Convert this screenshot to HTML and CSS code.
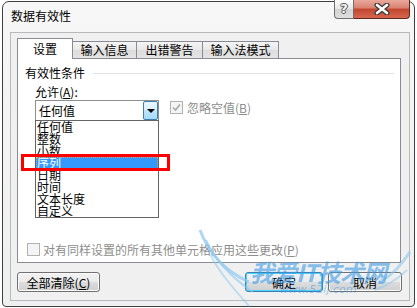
FILE: index.html
```html
<!DOCTYPE html>
<html>
<head>
    <title>数据有效性</title>
    <link rel="stylesheet" href="styles.css">
</head>
<body>
    <div class="window">
        <div class="titlebar">
            <span class="title">数据有效性</span>
            <div class="controls">
                <span class="btn-help">?</span>
                <span class="btn-close">
                    <svg width="16" height="12" viewBox="0 0 16 12">
                        <path d="M3 2 L13 10 M13 2 L3 10" stroke="#3a3a3a" stroke-width="5" stroke-linecap="round"/>
                        <path d="M3 2 L13 10 M13 2 L3 10" stroke="#ffffff" stroke-width="2.6" stroke-linecap="round"/>
                    </svg>
                </span>
            </div>
        </div>

        <div class="client">
            <div class="tabs">
                <div class="tab active">设置</div>
                <div class="tab tab-input">输入信息</div>
                <div class="tab tab-error">出错警告</div>
                <div class="tab tab-ime">输入法模式</div>
            </div>

            <div class="panel">
                <div class="legend">有效性条件</div>
                <div class="field-label">允许(<u>A</u>):</div>
                <div class="field-row">
                    <div class="combo">
                        <span class="combo-value">任何值</span>
                        <span class="combo-arrow"></span>
                    </div>
                    <label class="check disabled">
                        <span class="box">
                            <svg width="11" height="11" viewBox="0 0 11 11">
                                <path d="M2 5.5 L4.5 8 L9 2.5" fill="none" stroke="#a8a8a8" stroke-width="1.6"/>
                            </svg>
                        </span>
                        忽略空值(<u>B</u>)
                    </label>
                </div>

                <!-- open list of the combo -->
                <ul class="dropdown">
                    <li>任何值</li>
                    <li>整数</li>
                    <li>小数</li>
                    <li class="selected">序列</li>
                    <li>日期</li>
                    <li>时间</li>
                    <li>文本长度</li>
                    <li>自定义</li>
                </ul>
                <div class="marker"></div>

                <label class="check disabled apply-all">
                    <span class="box"></span>
                    对有同样设置的所有其他单元格应用这些更改(<u>P</u>)
                </label>
            </div>

            <div class="footer">
                <button class="btn btn-clear">全部清除(<u>C</u>)</button>
                <button class="btn btn-ok">确定</button>
                <button class="btn btn-cancel">取消</button>
            </div>
        </div>

        <!-- site watermark -->
        <svg class="wings" width="411" height="305" viewBox="0 0 411 305">
            <path d="M197 228 C205 250 220 268 246 280" fill="none" stroke="#8cc8f0" stroke-width="3" opacity="0.7"/>
            <path d="M203 238 C212 258 226 274 250 290" fill="none" stroke="#8cc8f0" stroke-width="2" opacity="0.6"/>
            <path d="M207 252 C216 270 230 286 246 304" fill="none" stroke="#8cc8f0" stroke-width="2" opacity="0.5"/>
            <path d="M407 250 C398 262 392 272 376 280" fill="none" stroke="#8cc8f0" stroke-width="3" opacity="0.6"/>
            <path d="M404 268 C396 276 388 282 372 288" fill="none" stroke="#8cc8f0" stroke-width="2" opacity="0.5"/>
        </svg>
        <div class="watermark">
            <div class="wm-name">我爱IT技术网</div>
            <div class="wm-url">www.52ij.com</div>
        </div>
    </div>
</body>
</html>
```

FILE: styles.css
```css
body {
    margin: 0;
    width: 417px;
    height: 308px;
    overflow: hidden;
    background: #ffffff;
    font-family: "Noto Sans CJK SC", sans-serif;
    font-size: 12px;
    color: #000;
}
.window {
    position: relative;
    margin: 1px 0 0 2px;
    width: 413px;
    height: 306px;
    box-sizing: border-box;
    border: 1px solid #3f3f3f;
    border-radius: 7px 7px 4px 4px;
    background: linear-gradient(#f7f7f7, #eeeff0);
    padding: 0 4px 0 7px;
    display: flex;
    flex-direction: column;
}
.titlebar {
    height: 30px;
    display: flex;
    align-items: flex-start;
}
.title {
    padding: 6px 0 0 1px;
    line-height: 16px;
}
.controls {
    margin: -2px 0 0 auto;
    display: flex;
}
.btn-help {
    width: 20px;
    height: 19px;
    box-sizing: border-box;
    border: 1px solid #6f6f6f;
    border-top: none;
    border-radius: 0 0 0 4px;
    background: linear-gradient(#fdfdfd, #e6e6e6 50%, #d2d2d2 50%, #dedede);
    text-align: center;
    font: bold 13px/18px "DejaVu Sans", sans-serif;
    color: #f6f6f6;
    text-shadow: 1px 0 #555, -1px 0 #555, 0 1px #555, 0 -1px #555;
}
.btn-close {
    width: 56px;
    height: 19px;
    box-sizing: border-box;
    border: 1px solid #5f2a20;
    border-top: none;
    border-left: none;
    border-radius: 0 0 4px 0;
    background: linear-gradient(#eaa99c, #d98170 45%, #c2452f 50%, #d6674e);
    display: flex;
    align-items: center;
    justify-content: center;
}
.client {
    height: 269px;
    box-sizing: border-box;
    border: 1px solid #b9b9b9;
    background: #f0f0f0;
    padding: 5px 7px 0 6px;
}
.tabs {
    display: flex;
    align-items: flex-end;
    height: 20px;
}
.tab {
    height: 17px;
    box-sizing: border-box;
    border: 1px solid #898c95;
    border-bottom: none;
    margin-left: -1px;
    background: linear-gradient(#f4f4f4, #e8e8e8 50%, #dcdcdc 50%, #e4e4e4);
    text-align: center;
    line-height: 16px;
}
.tab.active {
    position: relative;
    z-index: 1;
    margin-left: 0;
    width: 56px;
    height: 21px;
    margin-bottom: -1px;
    background: #ffffff;
    line-height: 20px;
}
.tab-input { width: 65px; }
.tab-error { width: 67px; }
.tab-ime { width: 77px; }
.panel {
    position: relative;
    width: 384px;
    height: 205px;
    box-sizing: border-box;
    border: 1px solid #898c95;
    background: #ffffff;
    padding: 6px 6px 5px 7px;
    display: flex;
    flex-direction: column;
}
.legend {
    display: flex;
    align-items: center;
    line-height: 16px;
}
.legend::after {
    content: "";
    flex: 1;
    height: 1px;
    margin-left: 8px;
    background: #dde2e7;
}
.field-label {
    margin: 3px 0 0 10px;
    line-height: 16px;
}
.field-row {
    display: flex;
    align-items: flex-start;
    margin-left: 10px;
}
.combo {
    width: 124px;
    height: 21px;
    box-sizing: border-box;
    border: 1px solid #8e8f8f;
    display: flex;
    align-items: center;
}
.combo-value {
    flex: 1;
    padding-left: 3px;
}
.combo-arrow {
    position: relative;
    width: 15px;
    height: 19px;
    box-sizing: border-box;
    border: 1px solid #3c7fb1;
    border-radius: 2px;
    background: linear-gradient(#eaf6fd, #d9f0fc 50%, #bee6fd 50%, #a7d9f5);
}
.combo-arrow::after {
    content: "";
    position: absolute;
    left: 3px;
    top: 7px;
    border-left: 4px solid transparent;
    border-right: 4px solid transparent;
    border-top: 4px solid #000;
}
.check {
    display: flex;
    align-items: center;
    line-height: 13px;
}
.check.disabled {
    color: #8d8d8d;
}
.field-row .check {
    margin: 1px 0 0 11px;
}
.box {
    width: 13px;
    height: 13px;
    box-sizing: border-box;
    border: 1px solid #b1b1b1;
    background: #f4f4f4;
    margin-right: 4px;
    display: flex;
    align-items: center;
    justify-content: center;
}
.apply-all {
    margin: auto 0 0 2px;
    height: 16px;
}
.apply-all .box {
    margin-right: 3px;
}
.dropdown {
    position: absolute;
    left: 17px;
    top: 61px;
    z-index: 2;
    width: 124px;
    margin: 0;
    padding: 0;
    list-style: none;
    box-sizing: border-box;
    border: 1px solid #646464;
    background: #ffffff;
}
.dropdown li {
    height: 12px;
    line-height: 12px;
    padding-left: 1px;
    white-space: nowrap;
}
.dropdown li.selected {
    background: #3399ff;
    color: #ffffff;
    outline: 1px dotted #e0a060;
    outline-offset: -1px;
}
.marker {
    position: absolute;
    left: 3px;
    top: 95px;
    z-index: 3;
    width: 149px;
    height: 17px;
    box-sizing: border-box;
    border: 3px solid #ff0000;
}
.footer {
    display: flex;
    padding-top: 9px;
}
.btn {
    height: 20px;
    box-sizing: border-box;
    border: 1px solid #707070;
    border-radius: 3px;
    background: linear-gradient(#f2f2f2, #ebebeb 50%, #dddddd 50%, #cfcfcf);
    box-shadow: inset 0 0 0 1px #fbfbfb;
    font: 12px "Noto Sans CJK SC", sans-serif;
    color: #000;
    padding: 0;
}
.btn-clear { width: 83px; }
.btn-ok {
    width: 78px;
    margin-left: auto;
    border-color: #3c7fb1;
    box-shadow: inset 0 0 0 1px #48d2fc;
}
.btn-cancel {
    width: 74px;
    margin-left: 5px;
}
.wings {
    position: absolute;
    left: 0;
    top: 0;
    z-index: 4;
    pointer-events: none;
}
.watermark {
    position: absolute;
    left: 244px;
    top: 258px;
    z-index: 5;
    width: 142px;
    pointer-events: none;
    text-align: center;
}
.wm-name {
    font: italic bold 24px/24px "Noto Sans CJK SC", sans-serif;
    color: rgba(60, 155, 230, 0.6);
    letter-spacing: -1px;
    white-space: nowrap;
}
.wm-url {
    font: italic 11px/11px "DejaVu Sans", sans-serif;
    color: rgba(60, 155, 230, 0.5);
}
```
